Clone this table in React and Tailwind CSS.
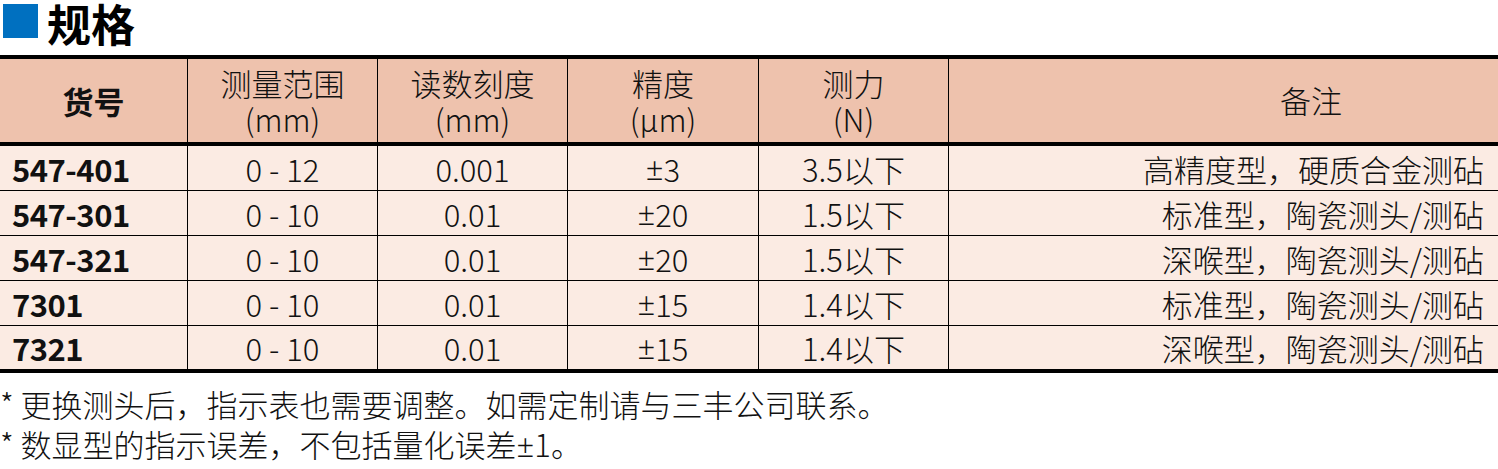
import React from "react";

const FONT = { fontFamily: '"Noto Sans CJK SC", "Noto Sans", sans-serif' };

const HEAD = [
  { top: "货号", bold: true },
  { top: "测量范围", bottom: "(mm)" },
  { top: "读数刻度", bottom: "(mm)" },
  { top: "精度", bottom: "(µm)" },
  { top: "测力", bottom: "(N)" },
];

const ROWS = [
  ["547-401", "0 - 12", "0.001", "±3", "3.5以下", "高精度型，硬质合金测砧"],
  ["547-301", "0 - 10", "0.01", "±20", "1.5以下", "标准型，陶瓷测头/测砧"],
  ["547-321", "0 - 10", "0.01", "±20", "1.5以下", "深喉型，陶瓷测头/测砧"],
  ["7301", "0 - 10", "0.01", "±15", "1.4以下", "标准型，陶瓷测头/测砧"],
  ["7321", "0 - 10", "0.01", "±15", "1.4以下", "深喉型，陶瓷测头/测砧"],
];

const COLS = "grid grid-cols-[188px_190px_190px_191px_190px_1fr]";

// the plus-minus sign is narrow in the reference, so take it from a latin font
function Pm({ text }) {
  if (!text.startsWith("±")) return text;
  return (
    <>
      <span className="font-['Noto_Sans']">±</span>
      {text.slice(1)}
    </>
  );
}

export default function App() {
  return (
    <div className="w-[1498px] h-[469px] overflow-hidden bg-white text-[#111]" style={FONT}>
      {/* title */}
      <div className="flex h-[55px] items-start pl-[3px] pt-[1px]">
        <div className="mt-[3px] h-[34px] w-[35px] bg-[#0070c0]" />
        <div className="ml-[9px] text-[44px] font-bold leading-[44px] text-black">规格</div>
      </div>

      {/* table */}
      <div className="border-y-[4px] border-black">
        <div className={`${COLS} h-[87px] border-b-[4px] border-black bg-[#eec2ad]`}>
          {HEAD.map((h) => (
            <div
              key={h.top}
              className="flex flex-col items-center justify-center border-r border-black text-[31px] leading-[36px] font-light"
            >
              <span className={h.bold ? "font-bold" : ""}>{h.top}</span>
              {h.bottom && <span>{h.bottom}</span>}
            </div>
          ))}
          <div className="flex items-center justify-center pl-[175px] text-[31px] font-light">备注</div>
        </div>
        {ROWS.map((r, i) => (
          <div
            key={r[0]}
            className={`${COLS} ${i < ROWS.length - 1 ? "h-[45px] border-b border-black" : "h-[43px]"} bg-[#fbebe3] text-[31px] leading-none`}
          >
            <div className="flex items-center border-r border-black pl-[12px] font-bold tracking-[-0.5px]">{r[0]}</div>
            {r.slice(1, 5).map((c, j) => (
              <div key={j} className="flex items-center justify-center border-r border-black font-light">
                <Pm text={c} />
              </div>
            ))}
            <div className="flex items-center justify-end pr-[14px] font-light">{r[5]}</div>
          </div>
        ))}
      </div>

      {/* notes */}
      <div className="pt-[11px] text-[31px] leading-[40px] font-light">
        <p>* 更换测头后，指示表也需要调整。如需定制请与三丰公司联系。</p>
        <p>
          * 数显型的指示误差，不包括量化误差<span className="font-['Noto_Sans']">±</span>1。
        </p>
      </div>
    </div>
  );
}
